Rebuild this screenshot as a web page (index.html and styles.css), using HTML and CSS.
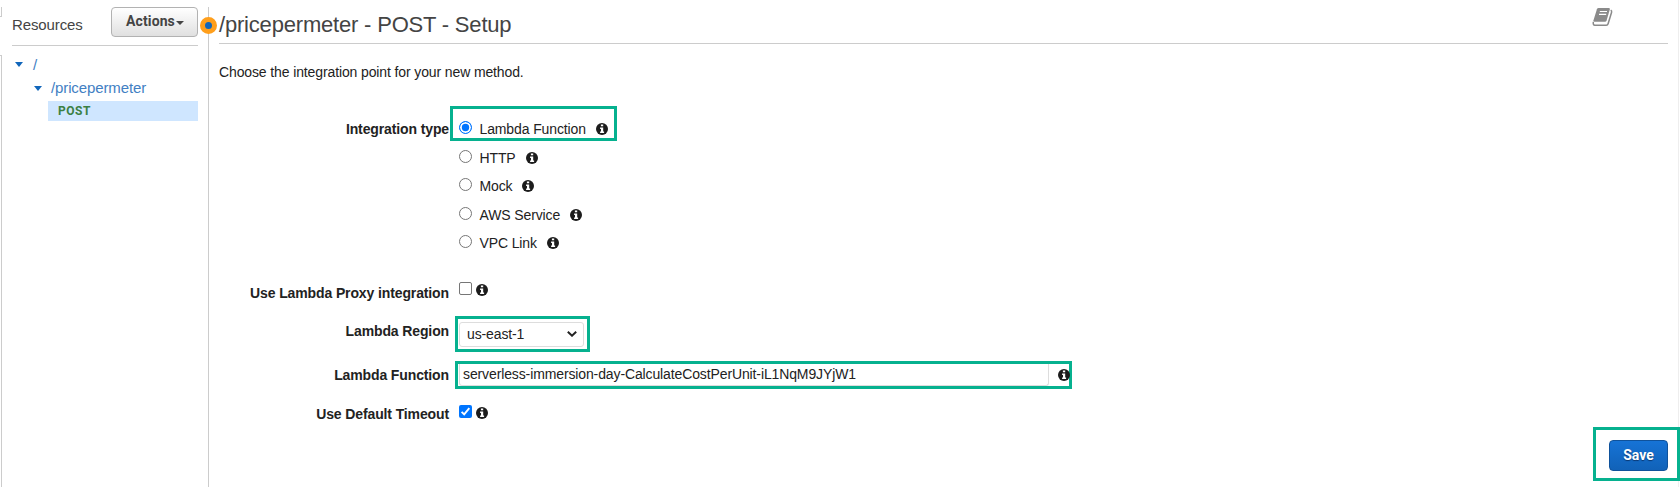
FILE: index.html
```html
<!DOCTYPE html>
<html lang="en">
<head>
<meta charset="utf-8">
<title>Method setup</title>
<link rel="stylesheet" href="styles.css">
</head>
<body>
<svg class="defs" width="0" height="0">
  <symbol id="info" viewBox="0 0 12 12">
    <circle cx="6" cy="6" r="6" fill="#1c1c1c"/>
    <path d="M4.900 1.500h2.300v1.800H4.900zM4.100 4.500h3.100v4h.9V10H4.100V8.500h.9V6h-.9z" fill="#fff"/>
  </symbol>
</svg>
<div class="app">
  <div class="edge"><i class="edge-top"></i><i class="edge-rest"></i></div>
  <aside class="sidebar">
    <header class="side-head">
      <span class="side-title">Resources</span>
      <button class="actions">Actions<i class="caret"></i></button>
    </header>
    <nav class="tree">
      <a class="node"><i class="arrow"></i><span>/</span></a>
      <a class="node child"><i class="arrow"></i><span>/pricepermeter</span></a>
      <a class="method">POST</a>
    </nav>
  </aside>
  <div class="divider"><i class="handle"></i></div>
  <main class="main">
    <header class="main-head">
      <h1>/pricepermeter - POST - Setup</h1>
      <svg class="book" width="21" height="20" viewBox="0 0 21 20">
        <path d="M6.600 1H16.700Q18.200 1 17.800 2.400L14.600 13.500Q14.200 14.800 12.900 14.800H2.300Q1 14.800 1.400 13.500L4.900 2.200Q5.300 1 6.600 1Z" fill="#8a8a8a"/>
        <path d="M7.800 4.500h7.200M7 7.300h7.200" stroke="#fff" stroke-width="1.200"/>
        <path d="M1.300 14.800Q.9 18.200 2.800 18.200H14.200Q15.700 18.200 16.100 16.800L19.600 5.200Q20 3.900 18.700 3.200" fill="none" stroke="#8a8a8a" stroke-width="1.500"/>
      </svg>
    </header>
    <p class="intro">Choose the integration point for your new method.</p>
    <form class="form">
      <div class="row types">
        <label class="label">Integration type</label>
        <div class="radios">
          <div class="option marked mark-type"><i class="radio on"></i><span>Lambda Function</span><svg class="info"><use href="#info"/></svg></div>
          <div class="option"><i class="radio"></i><span>HTTP</span><svg class="info"><use href="#info"/></svg></div>
          <div class="option"><i class="radio"></i><span>Mock</span><svg class="info"><use href="#info"/></svg></div>
          <div class="option"><i class="radio"></i><span>AWS Service</span><svg class="info"><use href="#info"/></svg></div>
          <div class="option"><i class="radio"></i><span>VPC Link</span><svg class="info"><use href="#info"/></svg></div>
        </div>
      </div>
      <div class="row proxy">
        <label class="label">Use Lambda Proxy integration</label>
        <div class="check-line"><i class="check"></i><svg class="info"><use href="#info"/></svg></div>
      </div>
      <div class="row region">
        <label class="label">Lambda Region</label>
        <div class="marked mark-region">
          <div class="select"><span>us-east-1</span>
            <svg width="10" height="6" viewBox="0 0 10 6"><path d="M.8.8 5 4.700 9.200.8" fill="none" stroke="#222" stroke-width="2"/></svg>
          </div>
        </div>
      </div>
      <div class="row function">
        <label class="label">Lambda Function</label>
        <div class="marked mark-function">
          <div class="input">serverless-immersion-day-CalculateCostPerUnit-iL1NqM9JYjW1</div>
          <svg class="info"><use href="#info"/></svg>
        </div>
      </div>
      <div class="row timeout">
        <label class="label">Use Default Timeout</label>
        <div class="check-line"><i class="check on"><svg width="13" height="13" viewBox="0 0 13 13"><path d="M2.600 6.800 5.200 9.400 10.300 3.200" fill="none" stroke="#fff" stroke-width="1.900"/></svg></i><svg class="info"><use href="#info"/></svg></div>
      </div>
    </form>
    <footer class="foot"><div class="save-mark"><button class="save">Save</button></div></footer>
  </main>
</div>
</body>
</html>
```
FILE: styles.css
```css
* { box-sizing: border-box; }
body { margin: 0; background: #fff; color: #222; font: 14px/20px "Liberation Sans", Arial, sans-serif; letter-spacing: -.12px; overflow: hidden; }
button { font-family: Roboto, "Liberation Sans", sans-serif; font-weight: 700; padding: 0; }
.defs { position: absolute; }
.app { display: flex; width: 1680px; height: 487px; }

.edge { width: 12px; display: flex; flex-direction: column; justify-content: space-between; padding-top: 7px; }
.edge-top { width: 2px; height: 10px; border-right: 1px solid #ccc; border-bottom: 1px solid #ccc; }
.edge-rest { width: 2px; height: 432px; border-right: 1px solid #ccc; border-top: 1px solid #ccc; }

.sidebar { width: 186px; padding-top: 7px; }
.side-head { display: flex; justify-content: space-between; height: 39px; border-bottom: 1px solid #ccc; }
.side-title { font-size: 15px; line-height: 20px; padding-top: 8px; color: #444; }
.actions { display: flex; justify-content: center; align-items: center; gap: 1px; width: 87px; height: 30px; padding: 0 0 2px 1px; border: 1px solid #b2b2b2; border-radius: 4px; background: linear-gradient(#fff, #e0e0e0); color: #444; font-size: 14px; letter-spacing: .1px; }
.caret { border: 4px solid transparent; border-top-color: #444; border-bottom: 0; margin-top: 3px; }
.tree { padding-top: 7px; font-size: 15px; }
.node { display: flex; align-items: center; height: 23.500px; padding-left: 3px; gap: 10px; color: #4280c3; }
.child { padding-left: 22px; gap: 9px; }
.arrow { border: 4.500px solid transparent; border-top: 5px solid #1166bb; border-bottom: 0; }
.method { display: block; height: 20px; margin: 1px 0 0 36px; padding-left: 10px; background: #cfe6ff; color: #3c8043; font: 700 12px/20px Roboto, sans-serif; letter-spacing: .5px; }

.divider { width: 21px; padding: 7px 0 0 10px; }
.divider::before { content: ""; display: block; width: 1px; height: 480px; background: #ccc; }
.handle { position: absolute; left: 200px; top: 17px; width: 17px; height: 17px; border: 5px solid #ff9f1c; border-radius: 50%; background: #1166bb; }

.main { flex: 1; display: flex; flex-direction: column; margin-right: 1px; border-right: 1px solid #eee; }
.main-head { display: flex; justify-content: space-between; width: 1449px; height: 44px; border-bottom: 1px solid #ccc; }
h1 { margin: 0; padding-top: 11px; font-size: 22px; line-height: 28px; font-weight: 400; color: #444; letter-spacing: -.19px; }
.book { margin: 7px 55px 0 0; }
.intro { margin: 0; padding-top: 18px; height: 62px; }

.row { display: flex; align-items: flex-start; }
.label { width: 230px; text-align: right; font-weight: 700; }
.marked { border: 3px solid #06b18f; }
.info { width: 12px; height: 12px; flex: none; }
.types { height: 166px; }
.types .label { padding-top: 13px; }
.radios { margin-left: 1px; }
.option { display: flex; align-items: center; height: 28.500px; padding-left: 9px; }
.option > span { margin: 0 10px 0 7.500px; padding-top: 1px; }
.option > .info { margin-top: 1px; }
.mark-type { width: 167px; height: 35px; padding: 9px 0 0 6px; margin-bottom: 2px; }
.radio { width: 13px; height: 13px; border: 1px solid #767676; border-radius: 50%; background: #fff; margin-top: -2px; }
.radio.on { border-color: #0075ff; background: #0075ff; border-width: 1.500px; box-shadow: inset 0 0 0 1.800px #fff; }
.proxy { height: 44px; }
.proxy .label { padding-top: 11px; }
.check-line { display: flex; align-items: center; gap: 3.500px; margin-left: 10px; }
.proxy .check-line { padding-top: 9px; }
.check { width: 13px; height: 13px; border: 1px solid #767676; border-radius: 2px; }
.check.on { border: 0; background: #0075ff; }
.check svg { display: block; }
.check-line .info { margin-top: 3px; }
.region { height: 45px; }
.region .label { padding-top: 5px; }
.mark-region { width: 135px; height: 36px; margin-left: 6px; padding: 3px 1px; }
.select { display: flex; align-items: center; justify-content: space-between; width: 125px; height: 25px; border: 1px solid #ddd; border-radius: 3px; padding: 0 6px 1px 7px; }
.function { height: 43px; }
.function .label { padding-top: 4px; }
.mark-function { display: flex; align-items: center; justify-content: space-between; width: 617px; height: 28px; margin-left: 6px; padding-left: 1px; }
.mark-function .info { margin-right: -1px; }
.input { width: 590px; height: 22px; border: 1px solid #ddd; border-top: 0; border-radius: 0 0 3px 3px; padding-left: 3px; line-height: 21px; }
.timeout { height: 23px; }
.timeout .check-line { padding-top: 0; }
.timeout .check-line .info { margin-top: 3px; }

.foot { display: flex; justify-content: flex-end; }
.save-mark { width: 87px; height: 54px; border: 3px solid #06b18f; padding: 10px 0 0 13px; margin-right: -2px; }
.save { width: 59px; height: 31px; border: 1px solid #0f529b; border-radius: 4px; background: linear-gradient(#1673d6, #1162b8); color: #fff; font-size: 14px; padding-bottom: 1px; text-shadow: 0 1px 1px #0a3770; }
```
